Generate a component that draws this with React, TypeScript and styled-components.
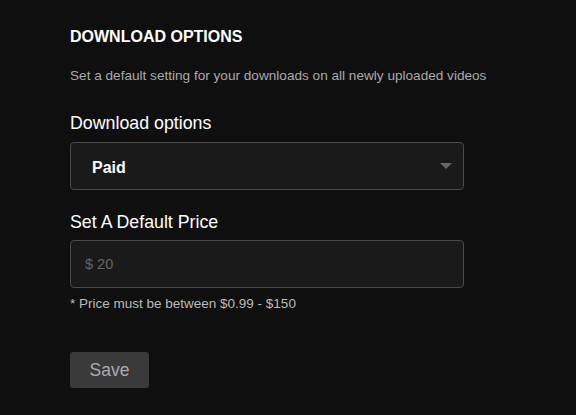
import styled, { createGlobalStyle } from 'styled-components';

const GlobalStyle = createGlobalStyle`
  html, body {
    margin: 0;
    padding: 0;
    background-color: #0f0f0f;
    font-family: 'Liberation Sans', Arial, sans-serif;
  }
`;

const Page = styled.div`
  width: 576px;
  height: 415px;
  box-sizing: border-box;
  padding: 28px 0 0 70px;
  background-color: #0f0f0f;
`;

const Section = styled.div`
  width: 394px;
  display: flex;
  flex-direction: column;
`;

const Heading = styled.h2`
  margin: 0;
  font-size: 16px;
  line-height: 18px;
  font-weight: 700;
  color: #ffffff;
`;

const Subtitle = styled.p`
  margin: 22px 0 0;
  font-size: 13.6px;
  line-height: 16px;
  color: #aaaaaa;
  white-space: nowrap;
`;

const Label = styled.label<{ $top: number }>`
  margin-top: ${(p) => p.$top}px;
  font-size: 17.8px;
  line-height: 20px;
  color: #ffffff;
`;

const Field = styled.div<{ $top: number }>`
  margin-top: ${(p) => p.$top}px;
  height: 48px;
  box-sizing: border-box;
  border: 1px solid #4a4a4a;
  border-radius: 4px;
  background-color: #1a1a1a;
  display: flex;
  align-items: center;
  justify-content: space-between;
`;

const SelectValue = styled.span`
  padding: 3px 0 0 21px;
  font-size: 16px;
  font-weight: 700;
  color: #ffffff;
`;

const Caret = styled.span`
  margin-right: 11px;
  width: 0;
  height: 0;
  border-left: 6px solid transparent;
  border-right: 6px solid transparent;
  border-top: 6px solid #666666;
`;

const InputValue = styled.span`
  padding-left: 14px;
  font-size: 14.5px;
  color: #666666;
`;

const Helper = styled.p`
  margin: 8px 0 0;
  font-size: 13.5px;
  line-height: 16px;
  color: #bbbbbb;
`;

const SaveButton = styled.button`
  margin-top: 40px;
  align-self: flex-start;
  width: 79px;
  height: 36px;
  border: none;
  border-radius: 3px;
  background-color: #3a3a3a;
  color: #aaaaaa;
  font-family: 'Liberation Sans', Arial, sans-serif;
  font-size: 17.5px;
  padding: 0;
`;

export default function App() {
  return (
    <>
      <GlobalStyle />
      <Page>
        <Section>
          <Heading>DOWNLOAD OPTIONS</Heading>
          <Subtitle>Set a default setting for your downloads on all newly uploaded videos</Subtitle>
          <Label $top={29}>Download options</Label>
          <Field $top={9}>
            <SelectValue>Paid</SelectValue>
            <Caret />
          </Field>
          <Label $top={22}>Set A Default Price</Label>
          <Field $top={8}>
            <InputValue>$ 20</InputValue>
          </Field>
          <Helper>* Price must be between $0.99 - $150</Helper>
          <SaveButton>Save</SaveButton>
        </Section>
      </Page>
    </>
  );
}
